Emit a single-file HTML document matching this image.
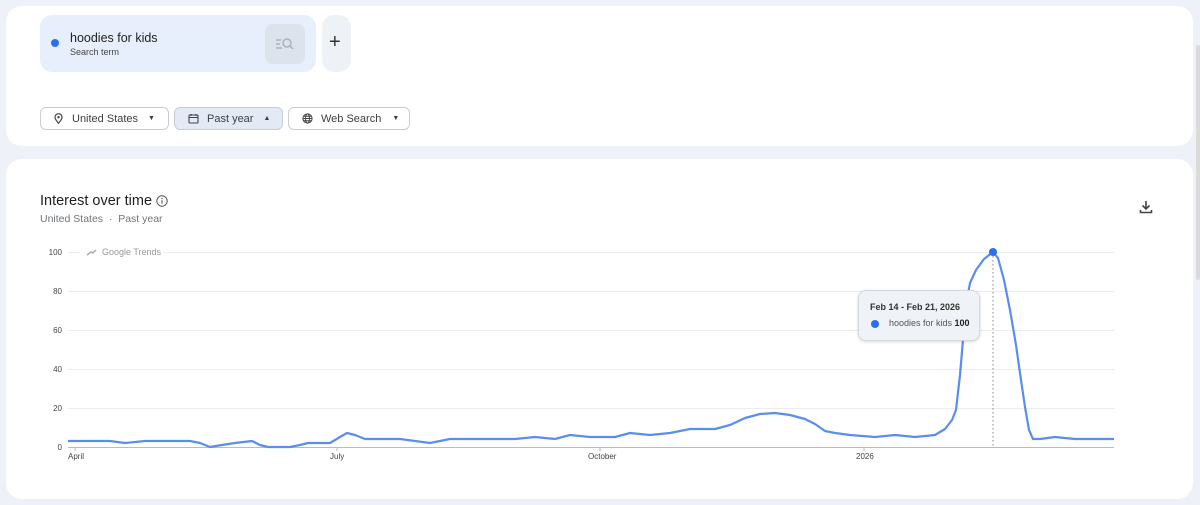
<!DOCTYPE html>
<html><head><meta charset="utf-8"><style>
*{margin:0;padding:0;box-sizing:border-box}
body{width:1200px;height:505px;background:#eef2f8;font-family:"Liberation Sans",sans-serif;position:relative;overflow:hidden;color:#1f1f1f}
.card{position:absolute;background:#fff;border-radius:16px}
.abs{position:absolute}
.chip{position:absolute;top:107px;height:23px;border:1px solid #c9ccd1;border-radius:6px;font-size:11px;color:#3c4043;display:flex;align-items:center}
</style></head><body>
<div class="card" style="left:6px;top:6px;width:1187px;height:140px"></div>
<div class="card" style="left:6px;top:159px;width:1187px;height:340px"></div>
<div class="abs" style="left:1196px;top:45px;width:4px;height:235px;background:#dadada;border-radius:2px"></div>

<div class="abs" style="left:40px;top:15px;width:276px;height:57px;background:#e8effc;border-radius:12px"></div>
<div class="abs" style="left:51px;top:39px;width:8px;height:8px;border-radius:50%;background:#2a6ff1"></div>
<div class="abs" style="left:70px;top:31px;font-size:12.5px;color:#1f1f1f">hoodies for kids</div>
<div class="abs" style="left:70px;top:47px;font-size:9px;color:#444">Search term</div>
<div class="abs" style="left:265px;top:24px;width:40px;height:40px;background:#dde3ec;border-radius:8px"></div>
<svg class="abs" style="left:275px;top:36px" width="20" height="16" viewBox="0 0 20 16"><g stroke="#aab2bd" stroke-width="1.5" fill="none"><path d="M1 4h5M1 8h4M1 12h6"/><circle cx="12" cy="7" r="4"/><path d="M15 10l3 3"/></g></svg>
<div class="abs" style="left:322px;top:15px;width:29px;height:57px;background:#eef1f6;border-radius:12px"></div>
<div class="abs" style="left:329px;top:31px;font-size:20px;color:#333;font-weight:300">+</div>

<div class="chip" style="left:40px;width:129px"><svg style="margin-left:13px" width="9" height="11" viewBox="0 0 9 11"><path d="M4.5 10.3C2 7.3 1 5.6 1 4.2a3.5 3.5 0 017 0c0 1.4-1 3.1-3.5 6.1z" fill="none" stroke="#444" stroke-width="1.2"/><circle cx="4.5" cy="4.2" r="1.2" fill="#444"/></svg><span style="margin-left:9px">United States</span><span style="margin-left:10px;font-size:7px">▼</span></div>
<div class="chip" style="left:174px;width:109px;background:#e3eaf6"><svg style="margin-left:13px" width="11" height="11" viewBox="0 0 11 11"><rect x="1" y="2" width="9" height="8" rx="1" fill="none" stroke="#444" stroke-width="1.1"/><path d="M1 4.5h9M3 1v2M8 1v2" stroke="#444" stroke-width="1.1"/></svg><span style="margin-left:8px">Past year</span><span style="margin-left:10px;font-size:7px">▲</span></div>
<div class="chip" style="left:288px;width:122px"><svg style="margin-left:13px" width="11" height="11" viewBox="0 0 11 11"><g fill="none" stroke="#444" stroke-width="1"><circle cx="5.5" cy="5.5" r="4.6"/><ellipse cx="5.5" cy="5.5" rx="2" ry="4.6"/><path d="M1 5.5h9M1.6 3.3h7.8M1.6 7.7h7.8"/></g></svg><span style="margin-left:8px">Web Search</span><span style="margin-left:11px;font-size:7px">▼</span></div>

<div class="abs" style="left:40px;top:193px;font-size:14.5px;color:#1f1f1f">Interest over time</div>
<svg class="abs" style="left:156px;top:195px" width="12" height="12" viewBox="0 0 12 12"><circle cx="6" cy="6" r="5.2" fill="none" stroke="#555" stroke-width="1"/><path d="M6 5.2v3.5" stroke="#555" stroke-width="1.1"/><circle cx="6" cy="3.6" r=".7" fill="#555"/></svg>
<div class="abs" style="left:40px;top:213px;font-size:10.5px;color:#70757a">United States &nbsp;·&nbsp; Past year</div>
<svg class="abs" style="left:1139px;top:200px" width="14" height="14" viewBox="0 0 14 14"><path d="M7 1v8M3.5 5.5L7 9l3.5-3.5M1.5 10v2.5h11V10" fill="none" stroke="#444" stroke-width="1.6"/></svg>

<svg class="abs" style="left:0;top:0" width="1200" height="505">
<g stroke="#ececec" stroke-width="1">
<path d="M68 252.5H1114M68 291.5H1114M68 330.5H1114M68 369.5H1114M68 408.5H1114"/>
</g>
<rect x="80" y="246" width="84" height="12" fill="#fff"/>
<path d="M68 447.5H1114" stroke="#bbb" stroke-width="1"/>
<path d="M75 447v4M337 447v4M600 447v4M864 447v4" stroke="#bbb"/>
<g font-family="Liberation Sans,sans-serif" font-size="8" fill="#444" text-anchor="end">
<text x="62" y="255">100</text><text x="62" y="294">80</text><text x="62" y="333">60</text><text x="62" y="372">40</text><text x="62" y="411">20</text><text x="62" y="450">0</text>
</g>
<g font-family="Liberation Sans,sans-serif" font-size="8" fill="#444">
<text x="68" y="459">April</text><text x="330" y="459">July</text><text x="588" y="459">October</text><text x="856" y="459">2026</text>
</g>
<path d="M87 255l4-3 2 1 3-3" stroke="#aaa" stroke-width="1.5" fill="none"/>
<text x="102" y="255" font-family="Liberation Sans,sans-serif" font-size="9" fill="#999">Google Trends</text>
<path d="M993 252V447" stroke="#888" stroke-width="1" stroke-dasharray="1.5 2.5"/>
<polyline fill="none" stroke="#5b8def" stroke-width="2.2" stroke-linejoin="round" points="68,441 110,441 125,443 145,441 190,441 200,443 210,447 222,445 235,443 252,441 260,445 268,447 290,447 300,445 308,443 330,443 340,437 347,433 355,435 365,439 400,439 415,441 430,443 450,439 515,439 535,437 555,439 570,435 590,437 615,437 630,433 650,435 670,433 690,429 715,429 730,425 745,418 760,414 775,413 790,415 805,419 815,424 825,431 835,433 850,435 875,437 895,435 915,437 935,435 945,429 952,420 956,410 960,375 963,340 966,305 970,283 976,270 984,259 993,252 998,258 1004,280 1010,310 1016,345 1021,380 1025,407 1029,430 1033,439 1040,439 1055,437 1065,438 1075,439 1114,439"/>
<circle cx="993" cy="252" r="4" fill="#2a6ff1"/>
</svg>

<div class="abs" style="left:858px;top:290px;width:122px;height:51px;background:#eff2f6;border:1px solid #d4d7dc;border-radius:8px;box-shadow:0 1px 3px rgba(0,0,0,.15)"></div>
<div class="abs" style="left:870px;top:302px;font-size:9px;font-weight:bold;color:#333">Feb 14 - Feb 21, 2026</div>
<div class="abs" style="left:871px;top:320px;width:8px;height:8px;border-radius:50%;background:#2a6ff1"></div>
<div class="abs" style="left:889px;top:318px;font-size:9px;color:#555">hoodies for kids <b style="color:#222">100</b></div>
</body></html>
